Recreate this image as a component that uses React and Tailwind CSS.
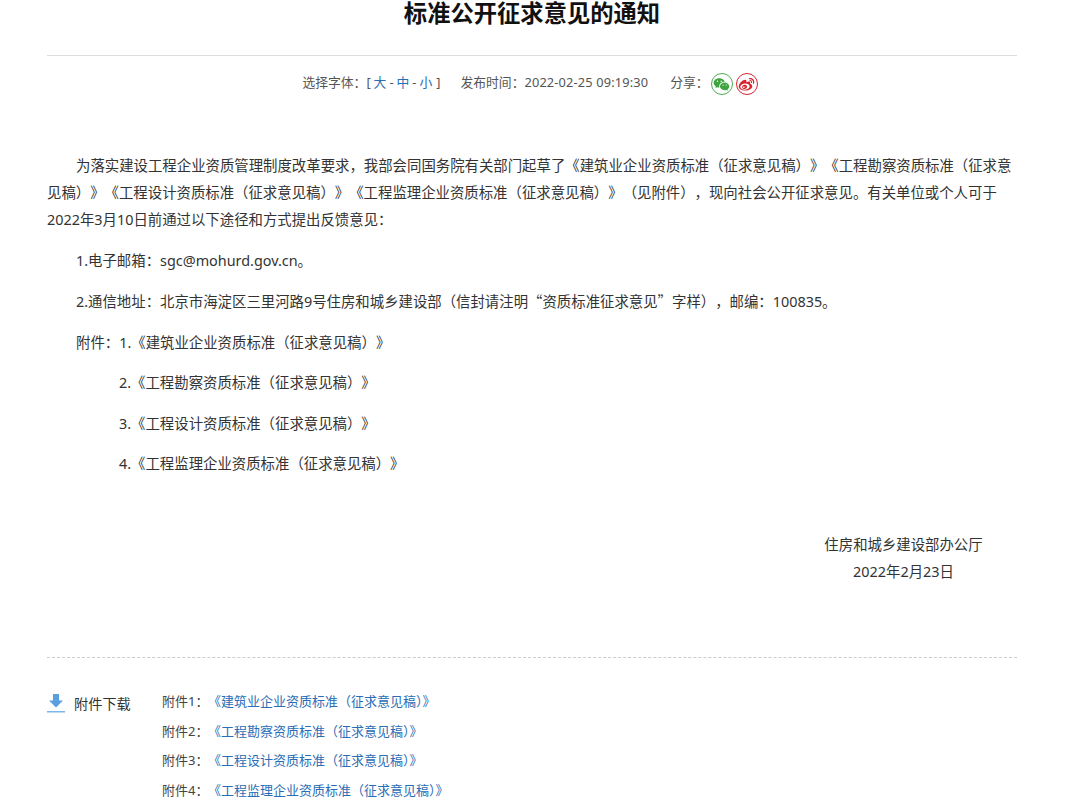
import React from "react";
import { RiWechatFill, RiWeiboFill } from "react-icons/ri";

const P = ({ children, className = "" }) => (
  <p className={"m-0 mb-[13.5px] " + className}>{children}</p>
);

const Q = ({ children }) => <span className="font-['Noto_Sans_CJK_SC',sans-serif]">{children}</span>;

const files = [
  "《建筑业企业资质标准（征求意见稿）》",
  "《工程勘察资质标准（征求意见稿）》",
  "《工程设计资质标准（征求意见稿）》",
  "《工程监理企业资质标准（征求意见稿）》",
];

export default function App() {
  return (
    <div className="h-[798px] overflow-hidden bg-white font-['Noto_Sans','Noto_Sans_CJK_SC',sans-serif] text-[#333]">
      <div className="mx-[47px] w-[970px]">
        <h1 className="m-0 h-[56px] border-b border-[#ddd] text-center text-[23.3px] font-bold leading-[26px] text-[#111]">
          标准公开征求意见的通知
        </h1>
        <div className="mt-[16px] flex h-[24px] items-center justify-center pr-[4px] text-[12.8px] text-[#555]">
          <div className="flex pb-[2px]">
            <span>选择字体：[</span>
            <span className="ml-[3px] text-[#2a6db5]">大</span>
            <span className="mx-[3px]">-</span>
            <span className="text-[#2a6db5]">中</span>
            <span className="mx-[3px]">-</span>
            <span className="text-[#2a6db5]">小</span>
            <span className="ml-[4px]">]</span>
            <span className="ml-[20px]">发布时间：<span className="tracking-[0.15px]">2022-02-25 09:19:30</span></span>
            <span className="ml-[22px]">分享：</span>
          </div>
          <span className="ml-[2px] flex h-[22px] w-[22px] items-center justify-center rounded-full border border-[#4caf50] text-[#3ea53e]">
            <RiWechatFill size={17} />
          </span>
          <span className="ml-[3px] flex h-[22px] w-[22px] items-center justify-center rounded-full border border-[#d9232e] text-[#d9232e]">
            <RiWeiboFill size={17} />
          </span>
        </div>
        <div className="mt-[56px] text-[14.4px] leading-[27px] text-[#333] [text-spacing-trim:space-all]">
          <P className="indent-[29px]">
            为落实建设工程企业资质管理制度改革要求，我部会同国务院有关部门起草了《建筑业企业资质标准（征求意见稿）》《工程勘察资质标准（征求意见稿）》《工程设计资质标准（征求意见稿）》《工程监理企业资质标准（征求意见稿）》（见附件），现向社会公开征求意见。有关单位或个人可于2022年3月10日前通过以下途径和方式提出反馈意见：
          </P>
          <P className="indent-[29px]">1.电子邮箱：sgc@mohurd.gov.cn。</P>
          <P className="indent-[29px]">2.通信地址：北京市海淀区三里河路9号住房和城乡建设部（信封请注明<Q>“</Q>资质标准征求意见<Q>”</Q>字样），邮编：100835。</P>
          <P className="indent-[29px]">附件：1.《建筑业企业资质标准（征求意见稿）》</P>
          <P className="pl-[72px]">2.《工程勘察资质标准（征求意见稿）》</P>
          <P className="pl-[72px]">3.《工程设计资质标准（征求意见稿）》</P>
          <P className="pl-[72px]">4.《工程监理企业资质标准（征求意见稿）》</P>
          <div className="mt-[54px] mr-[34px] ml-auto w-[159px] whitespace-nowrap text-center">
            <div>住房和城乡建设部办公厅</div>
            <div>2022年2月23日</div>
          </div>
        </div>
        <div className="mt-[72px] border-t border-dashed border-[#ccc]" />
        <div className="mt-[30px] flex">
          <div className="flex w-[115px] items-start pt-[1px] text-[14.2px] leading-[30px] text-[#333]">
            <svg width="18" height="20" viewBox="0 0 18 20" className="mt-[5px] mr-[9px]">
              <path d="M6 0h6v6.5h4L9 13.5 2 6.5h4z" fill="#5a9fe0" />
              <rect x="0" y="17" width="18" height="1.5" fill="#7db5e8" />
            </svg>
            附件下载
          </div>
          <ul className="m-0 -mt-[1px] list-none p-0 text-[13px] leading-[29.6px]">
            {files.map((f, i) => (
              <li key={i} className="flex whitespace-nowrap">
                <span className="w-[46px] flex-none text-[#444]">附件{i + 1}：</span>
                <a className="text-[#2a6db5]">{f}</a>
              </li>
            ))}
          </ul>
        </div>
      </div>
    </div>
  );
}
